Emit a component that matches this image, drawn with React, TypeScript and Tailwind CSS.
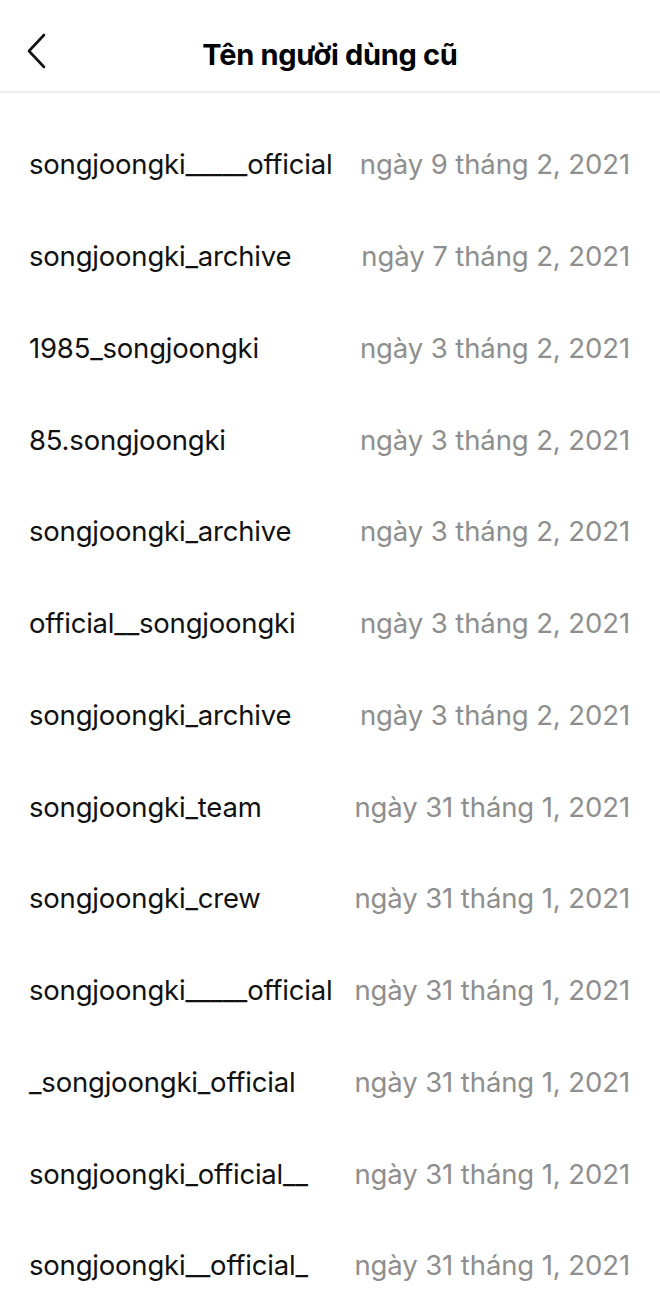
import React from 'react';

const rows: [string, string][] = [
  ['songjoongki_____official', 'ngày 9 tháng 2, 2021'],
  ['songjoongki_archive', 'ngày 7 tháng 2, 2021'],
  ['1985_songjoongki', 'ngày 3 tháng 2, 2021'],
  ['85.songjoongki', 'ngày 3 tháng 2, 2021'],
  ['songjoongki_archive', 'ngày 3 tháng 2, 2021'],
  ['official__songjoongki', 'ngày 3 tháng 2, 2021'],
  ['songjoongki_archive', 'ngày 3 tháng 2, 2021'],
  ['songjoongki_team', 'ngày 31 tháng 1, 2021'],
  ['songjoongki_crew', 'ngày 31 tháng 1, 2021'],
  ['songjoongki_____official', 'ngày 31 tháng 1, 2021'],
  ['_songjoongki_official', 'ngày 31 tháng 1, 2021'],
  ['songjoongki_official__', 'ngày 31 tháng 1, 2021'],
  ['songjoongki__official_', 'ngày 31 tháng 1, 2021'],
];

const App: React.FC = () => {
  return (
    <div className="w-[660px] h-[1313px] overflow-hidden bg-white text-black font-['Inter',sans-serif]">
      <header className="relative h-[93px] flex items-center justify-center border-b-2 border-[#ececec]">
        <button className="absolute left-[20px] top-[31px] w-[32px] h-[40px] flex items-center justify-center">
          <svg width="22" height="38" viewBox="0 0 22 38" fill="none" stroke="#111" strokeWidth="2.6" strokeLinecap="round" strokeLinejoin="round">
            <path d="M19 3L4 19l15 16" />
          </svg>
        </button>
        <h1 className="text-[29px] font-bold tracking-[-0.3px] mt-[19px]">Tên người dùng cũ</h1>
      </header>

      <main className="pt-[26px] flex flex-col">
        {rows.map(([name, date], i) => (
          <div key={i} className="h-[91.75px] flex items-center justify-between pl-[29px] pr-[30px]">
            <span className="text-[27.5px] tracking-[-0.2px] text-[#111]">{name}</span>
            <span className="text-[27.5px] tracking-[-0.1px] text-[#8e8e8e]">{date}</span>
          </div>
        ))}
      </main>
    </div>
  );
};

export default App;
